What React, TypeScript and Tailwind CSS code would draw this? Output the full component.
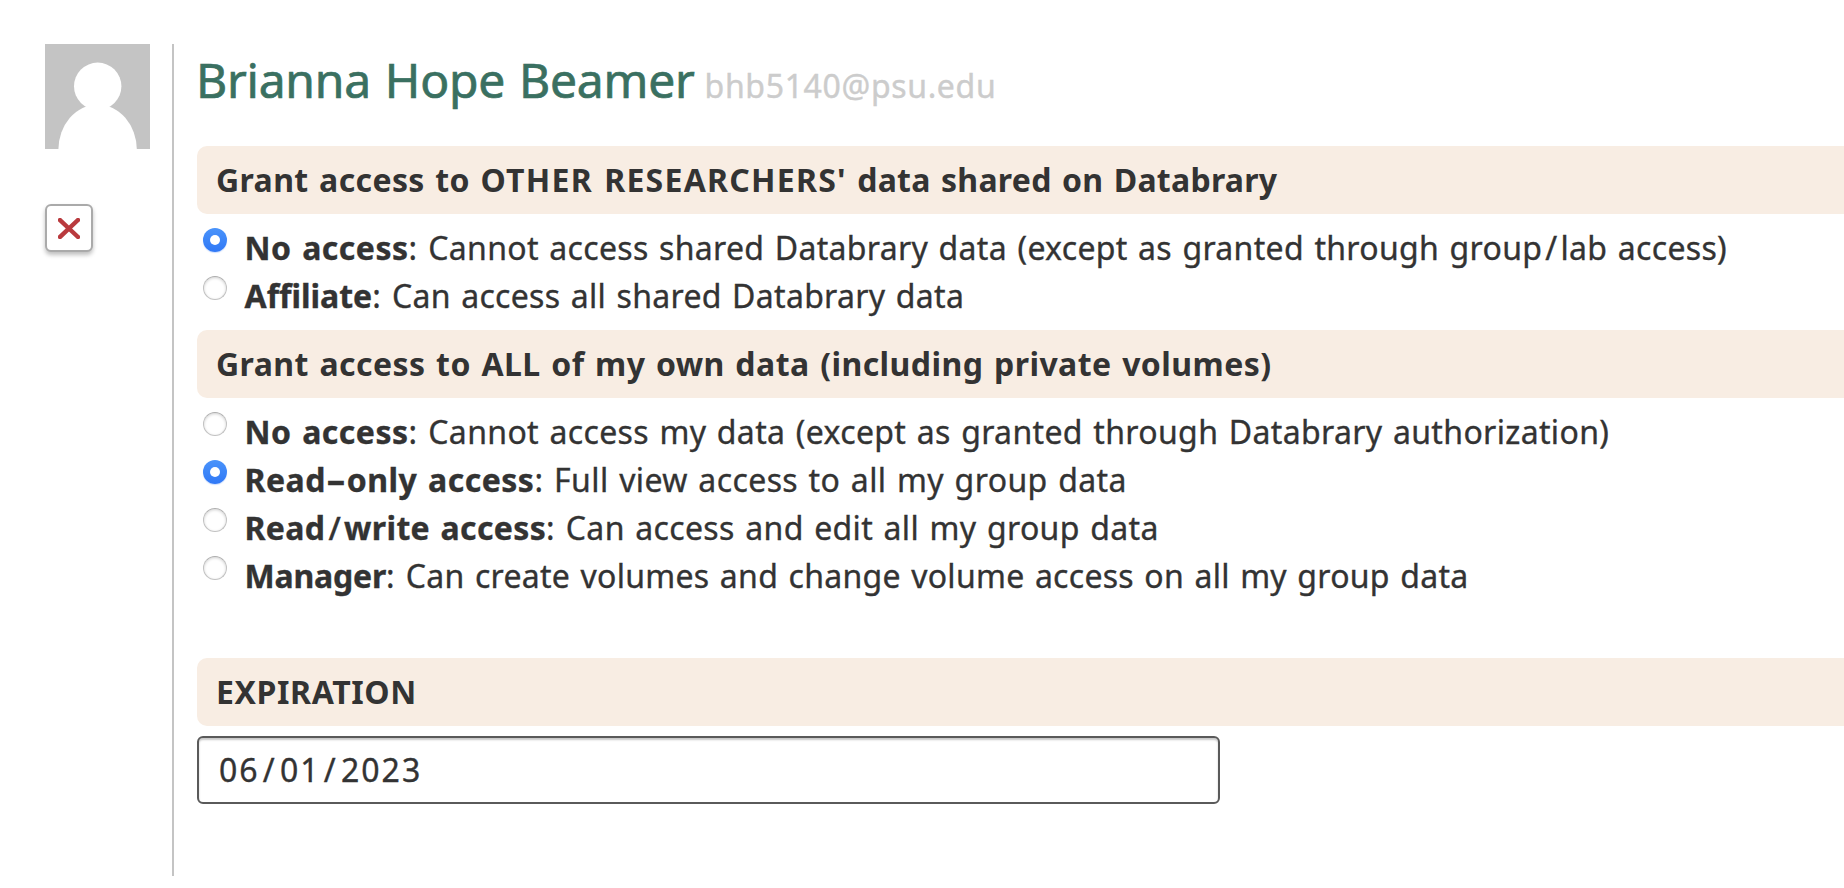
import { ReactNode, useState } from "react";

type Option = { id: string; label: ReactNode; labelClass: string; text: ReactNode; textClass: string };

const sharedOptions: Option[] = [
  {
    id: "none",
    label: "No access",
    labelClass: "tracking-[0.5px]",
    text: (
      <>
        Cannot access shared Databrary data (except as granted through group<span className="mx-[3px]">/</span>lab
        access)
      </>
    ),
    textClass: "tracking-[0.32px]",
  },
  {
    id: "affiliate",
    label: "Affiliate",
    labelClass: "tracking-normal",
    text: "Can access all shared Databrary data",
    textClass: "tracking-[0.3px]",
  },
];

const ownOptions: Option[] = [
  {
    id: "none",
    label: "No access",
    labelClass: "tracking-[0.5px]",
    text: "Cannot access my data (except as granted through Databrary authorization)",
    textClass: "tracking-[0.35px]",
  },
  {
    id: "read",
    label: (
      <>
        Read<span className="mx-[5px] inline-block scale-x-[1.8]">-</span>only access
      </>
    ),
    labelClass: "tracking-[0.5px]",
    text: "Full view access to all my group data",
    textClass: "tracking-[0.4px]",
  },
  {
    id: "write",
    label: (
      <>
        Read<span className="mx-[3px] font-medium">/</span>write access
      </>
    ),
    labelClass: "tracking-[0.35px]",
    text: "Can access and edit all my group data",
    textClass: "tracking-[0.35px]",
  },
  {
    id: "manager",
    label: "Manager",
    labelClass: "tracking-[-0.2px]",
    text: "Can create volumes and change volume access on all my group data",
    textClass: "tracking-[0.28px]",
  },
];

function Bar({ children }: { children: ReactNode }) {
  return (
    <h2 className="h-[68px] rounded-l-[10px] bg-[#f8ede3] pl-[19px] text-[32px] leading-[68px] font-bold">
      {children}
    </h2>
  );
}

function Radio({ checked }: { checked: boolean }) {
  return checked ? (
    <span className="mt-1 flex size-6 items-center justify-center rounded-full bg-linear-to-b from-[#4a93fa] to-[#3078f6] shadow-[0_1px_1px_rgba(48,120,246,0.25)]">
      <span className="size-[9.5px] rounded-full bg-white" />
    </span>
  ) : (
    <span className="mt-1 size-6 rounded-full border border-[#c2c2c2] border-t-[#adadad] bg-white shadow-[inset_0_1px_3px_rgba(0,0,0,0.18)]" />
  );
}

function Options({ options, initial }: { options: Option[]; initial: number }) {
  const [selected, setSelected] = useState(initial);
  return (
    <ul className="py-[10px] pl-[6px]">
      {options.map((o, i) => (
        <li
          key={o.id}
          className="flex h-12 text-[32px] leading-[48px] whitespace-nowrap"
          onClick={() => setSelected(i)}
        >
          <Radio checked={selected === i} />
          <p className="ml-[17.5px] [-webkit-text-stroke:0.35px_#333]">
            <strong className={o.labelClass}>{o.label}</strong>:{" "}
            <span className={o.textClass}>
              <span className="ml-px">{o.text}</span>
            </span>
          </p>
        </li>
      ))}
    </ul>
  );
}

function Avatar() {
  return (
    <svg viewBox="0 0 105 105" className="size-[105px] bg-[#c4c4c4]">
      <circle cx="52.7" cy="42.3" r="23.7" fill="#fff" />
      <ellipse cx="52.6" cy="106" rx="39.2" ry="45.5" fill="#fff" />
    </svg>
  );
}

export default function App() {
  return (
    <div className="flex h-[888px] overflow-hidden bg-white pt-11 pl-[45px] font-['Noto_Sans','Open_Sans',sans-serif] text-[#333] [word-spacing:1.8px]">
      <aside className="w-[127px] shrink-0">
        <Avatar />
        <button className="mt-[55px] flex size-12 items-center justify-center rounded-[6px] border-2 border-[#aaa] bg-white shadow-[0_3px_4px_rgba(0,0,0,0.25)]">
          <svg viewBox="0 0 22 21" className="h-[21px] w-[22px]">
            <path d="M2 2 L20 19 M20 2 L2 19" stroke="#b93a3e" strokeWidth="4.4" strokeLinecap="square" />
          </svg>
        </button>
      </aside>
      <main className="h-[832px] flex-1 border-l-2 border-[#c4c4c4] pl-[23px]">
        <h1 className="-ml-px flex h-[102px] items-baseline whitespace-nowrap">
          <span className="text-[48px] leading-[72px] tracking-[-0.25px] text-[#3a7061] [-webkit-text-stroke:0.7px_#3a7061]">
            Brianna Hope Beamer
          </span>
          <span className="ml-[10px] text-[32px] tracking-[0.65px] text-[#ccc] [-webkit-text-stroke:0.4px_#ccc]">
            bhb5140@psu.edu
          </span>
        </h1>
        <Bar>
          <span className="tracking-[0.38px]">Grant access to </span>
          <span className="tracking-[1.24px]">OTHER RESEARCHERS'</span>
          <span className="tracking-[0.26px]"> data shared on Databrary</span>
        </Bar>
        <Options options={sharedOptions} initial={0} />
        <Bar>
          <span className="tracking-[0.44px]">Grant access to ALL of my own data (including private volumes)</span>
        </Bar>
        <Options options={ownOptions} initial={1} />
        <div className="mt-12">
          <Bar>
            <span className="tracking-[0.6px]">EXPIRATION</span>
          </Bar>
        </div>
        <div className="mt-[10px] flex h-[68px] w-[1023px] rounded-[6px] border-2 border-[#5a5a5a] pl-[20px] text-[32px] leading-[64px] tracking-[2px] shadow-[inset_0_2px_2px_rgba(0,0,0,0.22)] [-webkit-text-stroke:0.35px_#333]">
          06<span className="w-[20.4px] text-center">/</span>01
          <span className="w-[20.4px] text-center">/</span>2023
        </div>
      </main>
    </div>
  );
}
